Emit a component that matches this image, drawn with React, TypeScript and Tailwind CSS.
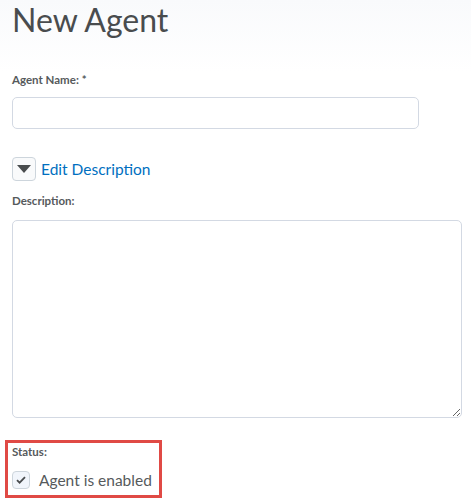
import { useState } from 'react';

const font = { fontFamily: 'Lato, "Open Sans", sans-serif' };

export default function App() {
  const [enabled, setEnabled] = useState(true);
  const [open, setOpen] = useState(true);

  return (
    <div className="min-h-[499px] w-[471px] overflow-hidden bg-white text-[#565a5c]" style={font}>
      {/* header */}
      <div className="bg-gradient-to-b from-[#f9fafc] to-white px-[12px] pt-[0px] pb-[32px]">
        <h1 className="text-[32px] leading-[40px] text-[#494c4e]">New Agent</h1>
      </div>

      <div className="px-[12px]">
        {/* agent name */}
        <label className="block text-[11.5px] font-bold leading-[16px]">Agent Name: *</label>
        <input
          type="text"
          className="mt-[9px] block h-[32px] w-[407px] rounded-[5px] border border-[#d3d9e3] bg-white px-3 outline-none"
        />

        {/* edit description toggle */}
        <button
          type="button"
          onClick={() => setOpen(!open)}
          className="mt-[28px] flex items-center gap-[5px]"
        >
          <span className="flex h-[24px] w-[24px] items-center justify-center rounded-[4px] border border-[#cdd5dc] bg-[#f9fafb]">
            <svg width="14" height="8" viewBox="0 0 14 8">
              <path d="M0 0h14L7 8z" fill="#494c4e" />
            </svg>
          </span>
          <span className="text-[15.5px] leading-[24px] text-[#006fbf]">Edit Description</span>
        </button>

        {/* description */}
        <label className="mt-[12px] block text-[11.5px] font-bold leading-[16px]">Description:</label>
        <textarea className="mt-[11px] block h-[198px] w-[450px] rounded-[5px] border border-[#d3d9e3] bg-white px-3 py-2 outline-none" />
      </div>

      {/* status, highlighted */}
      <div className="ml-[5px] mt-[22px] w-[157px] border-[3px] border-[#e04a45] px-[4px] pt-[1px] pb-[3px]">
        <div className="text-[11.5px] font-bold leading-[16px]">Status:</div>
        <label className="mt-[8px] flex items-center gap-[9px] whitespace-nowrap">
          <button
            type="button"
            onClick={() => setEnabled(!enabled)}
            className="flex h-[18px] w-[18px] items-center justify-center rounded-[4px] border border-[#cdd5dc] bg-[#f1f5fb]"
          >
            {enabled && (
              <svg width="10" height="8" viewBox="0 0 10 8">
                <path d="M1 4.2l2.6 2.5L9 1.2" fill="none" stroke="#494c4e" strokeWidth="1.8" />
              </svg>
            )}
          </button>
          <span className="text-[15.5px] leading-[24px]">Agent is enabled</span>
        </label>
      </div>
    </div>
  );
}
